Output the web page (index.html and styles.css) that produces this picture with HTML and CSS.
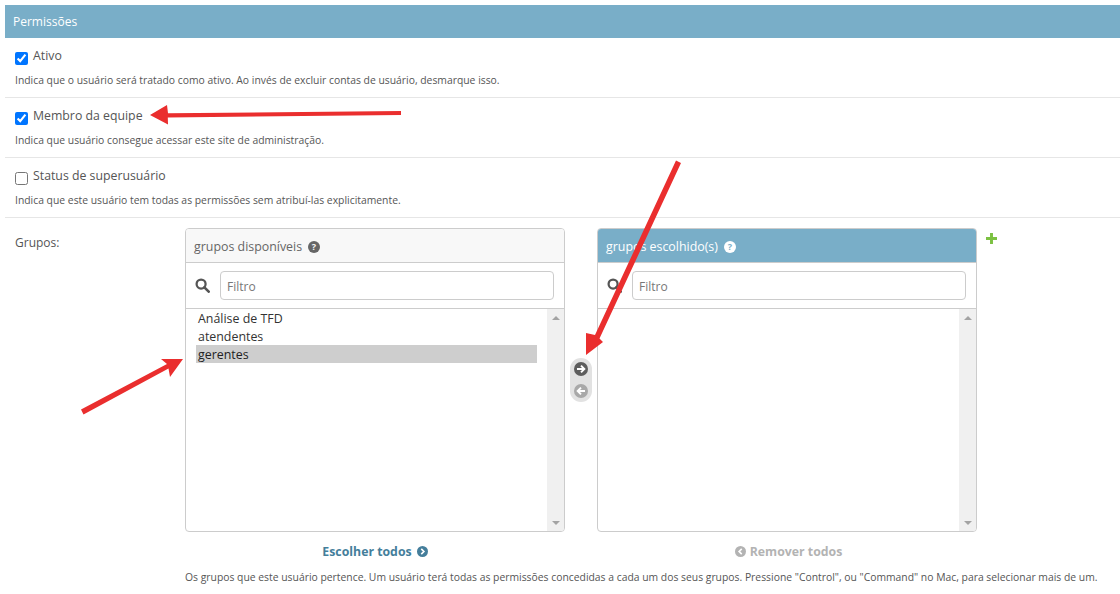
FILE: index.html
```html
<!DOCTYPE html>
<html lang="pt">
<head>
<meta charset="utf-8">
<title>Permissões</title>
<link rel="stylesheet" href="styles.css">
</head>
<body>
<main class="module">
  <h2 class="module-title">Permissões</h2>
  <div class="form-row">
    <div class="check-line"><input type="checkbox" checked><label>Ativo</label></div>
    <p class="help">Indica que o usuário será tratado como ativo. Ao invés de excluir contas de usuário, desmarque isso.</p>
  </div>
  <div class="form-row">
    <div class="check-line"><input type="checkbox" checked><label>Membro da equipe</label></div>
    <p class="help">Indica que usuário consegue acessar este site de administração.</p>
  </div>
  <div class="form-row">
    <div class="check-line"><input type="checkbox"><label>Status de superusuário</label></div>
    <p class="help">Indica que este usuário tem todas as permissões sem atribuí-las explicitamente.</p>
  </div>
  <div class="groups-row">
    <div class="groups-label">Grupos:</div>
    <div class="groups-field">
      <div class="selector">
        <div class="sel-col">
          <section class="sel-box">
            <h3 class="sel-title">grupos disponíveis
              <svg class="help-ico" viewBox="0 0 16 16"><circle cx="8" cy="8" r="8" fill="currentColor"/><text x="8" y="12.4" text-anchor="middle" class="q">?</text></svg>
            </h3>
            <div class="sel-filter">
              <svg class="search-ico" viewBox="0 0 16 16"><circle cx="6.5" cy="6.5" r="4.8" fill="none" stroke="currentColor" stroke-width="2.4"/><path d="M10 10l4.6 4.6" stroke="currentColor" stroke-width="2.8" stroke-linecap="round"/></svg>
              <input class="filter-input" type="text" placeholder="Filtro">
            </div>
            <div class="sel-list">
              <ul class="options">
                <li>Análise de TFD</li>
                <li>atendentes</li>
                <li class="selected">gerentes</li>
              </ul>
              <div class="scrollbar"><i class="sb-up"></i><i class="sb-down"></i></div>
            </div>
          </section>
          <div class="sel-action">
            <a class="action on">Escolher todos
              <svg class="act-ico" viewBox="0 0 16 16"><circle cx="8" cy="8" r="8" fill="currentColor"/><path d="M6.2 4.2L10 8l-3.8 3.8" fill="none" stroke="#fff" stroke-width="2.4"/></svg>
            </a>
          </div>
        </div>
        <div class="movers">
          <svg class="mv-ico dark" viewBox="0 0 16 16"><circle cx="8" cy="8" r="8" fill="currentColor"/><path d="M3.4 8h8M8 4.2L11.8 8 8 11.8" fill="none" stroke="#fff" stroke-width="2.2"/></svg>
          <svg class="mv-ico light" viewBox="0 0 16 16"><circle cx="8" cy="8" r="8" fill="currentColor"/><path d="M12.6 8h-8M8 4.2L4.2 8 8 11.8" fill="none" stroke="#fff" stroke-width="2.2"/></svg>
        </div>
        <div class="sel-col">
          <section class="sel-box">
            <h3 class="sel-title chosen">grupos escolhido(s)
              <svg class="help-ico" viewBox="0 0 16 16"><circle cx="8" cy="8" r="8" fill="#fff"/><text x="8" y="12.4" text-anchor="middle" class="q blue">?</text></svg>
            </h3>
            <div class="sel-filter">
              <svg class="search-ico" viewBox="0 0 16 16"><circle cx="6.5" cy="6.5" r="4.8" fill="none" stroke="currentColor" stroke-width="2.4"/><path d="M10 10l4.6 4.6" stroke="currentColor" stroke-width="2.8" stroke-linecap="round"/></svg>
              <input class="filter-input" type="text" placeholder="Filtro">
            </div>
            <div class="sel-list">
              <ul class="options"></ul>
              <div class="scrollbar"><i class="sb-up"></i><i class="sb-down"></i></div>
            </div>
          </section>
          <div class="sel-action">
            <a class="action off">
              <svg class="act-ico" viewBox="0 0 16 16"><circle cx="8" cy="8" r="8" fill="currentColor"/><path d="M9.8 4.2L6 8l3.8 3.8" fill="none" stroke="#fff" stroke-width="2.4"/></svg>
              Remover todos
            </a>
          </div>
        </div>
        <svg class="add-ico" viewBox="0 0 12 12"><path d="M4.4 0h3.2v4.4H12v3.2H7.600V12H4.4V7.600H0V4.400h4.400z" fill="#7cc142"/></svg>
      </div>
      <p class="help groups-help">Os grupos que este usuário pertence. Um usuário terá todas as permissões concedidas a cada um dos seus grupos. Pressione "Control", ou "Command" no Mac, para selecionar mais de um.</p>
    </div>
  </div>
</main>
<svg class="annotations" viewBox="0 0 1120 594">
  <g fill="#ea2e2e">
    <path d="M401 111L168 113.300 167 105 150 115 168 124.500 167.800 117.500 401 115z"/>
    <path d="M676 160.500L595 335 586 333 586 355 603 342 599.500 338.500 681 163z"/>
    <path d="M81 409.500L167 364 161 359 183 359 170 377 168.500 368.500 83.500 414.500z"/>
  </g>
</svg>
</body>
</html>
```

FILE: styles.css
```css
* { box-sizing: border-box; }
html, body { margin: 0; padding: 0; }
body {
  width: 1120px;
  height: 594px;
  overflow: hidden;
  background: #fff;
  position: relative;
  padding: 5px 0 0 5px;
  font-family: "Open Sans", "Noto Sans", sans-serif;
  color: #444;
}
.module-title {
  margin: 0;
  height: 33px;
  line-height: 34px;
  padding-left: 8px;
  background: #79aec8;
  color: #fff;
  font-size: 12px;
  font-weight: 400;
}
.form-row {
  height: 60px;
  border-bottom: 1px solid #e6e6e6;
  padding: 7px 0 0 10px;
}
.check-line {
  display: flex;
  align-items: center;
  height: 20px;
  font-size: 12.300px;
  color: #555;
}
.check-line input {
  margin: 7px 5px 0 0;
  width: 13px;
  height: 13px;
  accent-color: #0075ff;
}
.help {
  margin: 7px 0 0;
  font-size: 10.370px;
  line-height: 16px;
  color: #555;
}
.groups-row {
  display: flex;
  padding: 10px 0 0 10px;
}
.groups-label {
  width: 170px;
  font-size: 12px;
  line-height: 31px;
  height: 30px;
  margin-top: -1px;
  color: #555;
}
.selector {
  display: flex;
  position: relative;
}
.sel-col { width: 380px; }
.sel-box {
  width: 380px;
  height: 304px;
  border: 1px solid #ccc;
  border-radius: 4px;
  overflow: hidden;
  display: flex;
  flex-direction: column;
}
.sel-title {
  margin: 0;
  height: 34px;
  flex: none;
  display: flex;
  align-items: center;
  gap: 6px;
  padding: 2px 0 0 8px;
  background: #f8f8f8;
  border-bottom: 1px solid #ccc;
  font-size: 12.400px;
  font-weight: 400;
  color: #666;
}
.sel-title.chosen { background: #79aec8; color: #fff; }
.help-ico { width: 12px; height: 12px; color: #666; }
.q { font: 700 12px "Open Sans", sans-serif; fill: #f8f8f8; }
.q.blue { fill: #79aec8; }
.sel-filter {
  height: 46px;
  flex: none;
  display: flex;
  align-items: center;
  padding: 0 10px 0 9px;
  border-bottom: 1px solid #ccc;
}
.search-ico { width: 15px; height: 15px; flex: none; color: #555; margin-right: 10px; }
.filter-input {
  flex: 1;
  min-width: 0;
  height: 29px;
  border: 1px solid #ccc;
  border-radius: 4px;
  padding: 2px 6px 0;
  font: 12px "Open Sans", sans-serif;
  color: #333;
}
.filter-input::placeholder { color: #777; opacity: 1; }
.sel-list { flex: 1; display: flex; min-height: 0; }
.options {
  flex: 1;
  margin: 0;
  padding: 0 10px;
  list-style: none;
  font-size: 12.400px;
  color: #333;
}
.options li { height: 18px; line-height: 20px; padding-left: 2px; }
.options li.selected { background: #cecece; color: #222; }
.scrollbar {
  width: 17px;
  background: #f0f0f0;
  display: flex;
  flex-direction: column;
  justify-content: space-between;
  align-items: center;
  padding: 7px 0 6px;
}
.sb-up, .sb-down { width: 0; height: 0; border-left: 4px solid transparent; border-right: 4px solid transparent; }
.sb-up { border-bottom: 4px solid #a3a3a3; }
.sb-down { border-top: 4px solid #a3a3a3; }
.sel-action {
  height: 38px;
  display: flex;
  align-items: center;
  justify-content: center;
}
.action {
  display: flex;
  align-items: center;
  gap: 5px;
  font-size: 12.300px;
  font-weight: 700;
}
.action.on { color: #447e9b; }
.action.off { color: #b3b3b3; margin-left: 3px; gap: 4px; }
.act-ico { width: 11px; height: 11px; }
.movers {
  width: 32px;
  flex: none;
  display: flex;
  flex-direction: column;
  align-items: center;
  gap: 8px;
  align-self: flex-start;
  margin-top: 130px;
  padding: 4px 0;
  position: relative;
}
.movers::before {
  content: "";
  position: absolute;
  left: 5px;
  top: 0;
  width: 22px;
  height: 44px;
  border-radius: 11px;
  background: #e2e2e2;
}
.mv-ico { position: relative; width: 14px; height: 14px; }
.mv-ico.dark { color: #5d5d5d; }
.mv-ico.light { color: #a8a8a8; }
.add-ico {
  position: absolute;
  left: 801px;
  top: 5px;
  width: 11px;
  height: 11px;
}
.groups-help {
  margin: 0;
  margin-top: -1px;
  white-space: nowrap;
}
.annotations {
  position: absolute;
  left: 0;
  top: 0;
  width: 1120px;
  height: 594px;
  pointer-events: none;
}
```
